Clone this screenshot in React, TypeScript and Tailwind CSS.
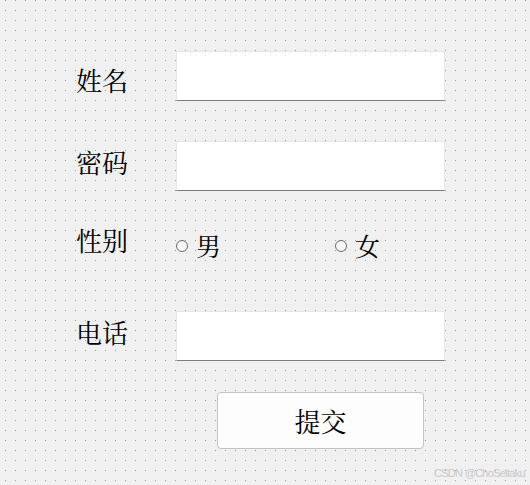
import React from "react";

const cjk = "font-['Noto_Serif_CJK_SC','Noto_Sans_CJK_SC',serif]";

function Field({ label, shift }: { label: string; shift: string }) {
  return (
    <div className="flex h-[50px] items-center">
      <span className={`w-[100px] text-[26px] leading-none text-black ${cjk} ${shift}`}>
        {label}
      </span>
      <input
        type="text"
        className="h-[50px] w-[269px] border border-[#e6e6e6] border-b-[#7c7c7c] bg-white outline-none"
      />
    </div>
  );
}

function Radio({ label }: { label: string }) {
  return (
    <label className="flex items-center gap-[8px]">
      <span className="mt-[2px] h-[12px] w-[12px] rounded-full border border-[#6b6b6b] bg-[#f6f6f6]" />
      <span className={`text-[25px] leading-none text-black ${cjk}`}>{label}</span>
    </label>
  );
}

export default function App() {
  return (
    <div className="relative h-[485px] w-[530px] overflow-hidden bg-[#f0f0f0] bg-[image:radial-gradient(circle_at_5.5px_0.5px,#9c9c9c_0.7px,transparent_0.9px)] bg-[size:10px_10px]">
      <div className="flex flex-col pl-[76px] pt-[51px]">
        <Field label="姓名" shift="mt-[8px]" />
        <div className="mt-[40px]">
          <Field label="密码" shift="mb-[8px]" />
        </div>
        <div className="mt-[29px] flex h-[50px] items-center">
          <span className={`mb-[10px] w-[100px] text-[26px] leading-none text-black ${cjk}`}>
            性别
          </span>
          <div className="flex w-[269px] items-center">
            <div className="w-[159px]">
              <Radio label="男" />
            </div>
            <Radio label="女" />
          </div>
        </div>
        <div className="mt-[41px]">
          <Field label="电话" shift="mb-[8px]" />
        </div>
        <div className="mt-[31px] pl-[141px]">
          <button
            className={`h-[57px] w-[207px] rounded-[4px] border border-[#c3c3c3] bg-[#fdfdfd] text-[26px] leading-none text-black ${cjk}`}
          >
            提交
          </button>
        </div>
      </div>
      <div className="absolute bottom-[6px] right-[5px] font-['Liberation_Sans',sans-serif] text-[11px] leading-none tracking-[-0.7px] text-[#c9c9c9]">
        CSDN @ChoSeitaku
      </div>
    </div>
  );
}
